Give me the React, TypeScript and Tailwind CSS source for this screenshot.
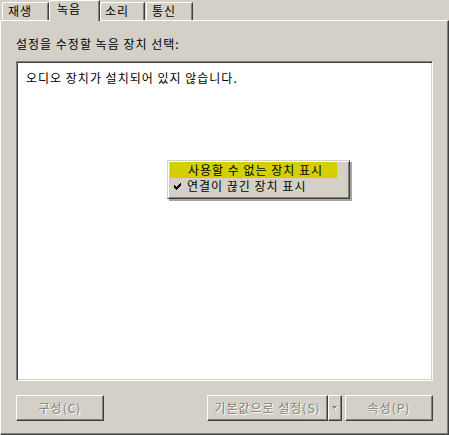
import React from "react";

function Btn({ w, children, extra = "" }: { w: string; children: React.ReactNode; extra?: string }) {
  return (
    <div
      className={`${w} ${extra} h-[26px] flex items-center justify-center border border-t-white border-l-white border-r-[#404040] border-b-[#404040] shadow-[inset_-1px_-1px_0_#808080] text-[12px] leading-[14px] text-[#808080] [text-shadow:1px_1px_0_#ffffff]`}
    >
      {children}
    </div>
  );
}

export default function App() {
  return (
    <div className="relative w-[449px] h-[435px] bg-[#d4d0c8] flex flex-col font-['Noto_Sans_CJK_KR','Noto_Sans',sans-serif] tracking-[1px] text-black overflow-hidden">
      {/* Tabs */}
      <div className="h-[20px] flex items-end shrink-0">
        <div className="ml-[2px] w-[47px] h-[18px] border-t border-l border-r border-t-white border-l-white border-r-[#404040] shadow-[inset_-1px_0_0_#808080] rounded-tl-[2px] text-[12px] leading-[16px] pl-[5px]">
          재생
        </div>
        <div className="relative z-10 w-[51px] h-[21px] -mb-px bg-[#d4d0c8] border-t border-l border-r border-t-white border-l-white border-r-[#404040] shadow-[inset_-1px_0_0_#808080] rounded-tl-[2px] text-[12px] leading-[16px] pl-[7px]">
          녹음
        </div>
        <div className="w-[45px] h-[18px] border-t border-l border-r border-t-white border-l-white border-r-[#404040] shadow-[inset_-1px_0_0_#808080] rounded-tl-[2px] text-[12px] leading-[16px] pl-[4px]">
          소리
        </div>
        <div className="ml-[1px] w-[47px] h-[18px] border-t border-l border-r border-t-white border-l-white border-r-[#404040] shadow-[inset_-1px_0_0_#808080] rounded-tl-[2px] text-[12px] leading-[16px] pl-[5px]">
          통신
        </div>
      </div>

      {/* Panel */}
      <div className="flex-1 flex flex-col border-t border-l border-r border-b border-t-white border-l-white border-r-[#404040] border-b-[#404040] shadow-[inset_-1px_-1px_0_#808080] pl-[15px]">
        <div className="mt-[16px] h-[14px] text-[12px] leading-[14px]">설정을 수정할 녹음 장치 선택:</div>
        <div className="mt-[10px] w-[417px] h-[320px] bg-white border border-t-[#808080] border-l-[#808080] border-r-white border-b-white shadow-[inset_1px_1px_0_#404040,inset_-1px_-1px_0_#d4d0c8] pl-[9px] pt-[9px]">
          <div className="text-[12px] leading-[14px]">오디오 장치가 설치되어 있지 않습니다.</div>
        </div>
        <div className="mt-[14px] w-[417px] flex items-start">
          <Btn w="w-[88px]">구성(C)</Btn>
          <div className="flex-1" />
          <Btn w="w-[121px]">기본값으로 설정(S)</Btn>
          <div className="w-[14px] h-[26px] flex items-center justify-center border border-t-white border-l-white border-r-[#404040] border-b-[#404040] shadow-[inset_-1px_-1px_0_#808080]">
            <svg width="6" height="4" viewBox="0 0 6 4" className="overflow-visible">
              <polygon points="1,1 6,1 3.5,4" fill="#ffffff" />
              <polygon points="0,0 5,0 2.5,3" fill="#808080" />
            </svg>
          </div>
          <Btn w="w-[88px]" extra="ml-[3px]">속성(P)</Btn>
        </div>
      </div>

      {/* Context menu */}
      <div className="absolute left-[167px] top-[160px] w-[183px] h-[39px] bg-[#d4d0c8] border border-t-[#d4d0c8] border-l-[#d4d0c8] border-r-[#404040] border-b-[#404040] shadow-[inset_1px_1px_0_#ffffff,inset_-1px_-1px_0_#808080,2px_2px_0_rgba(0,0,0,0.35)] pt-[1px] pl-[2px]">
        <div className="w-[167px] h-[16px] bg-[#d4d000] pl-[18px] text-[12px] leading-[16px]">사용할 수 없는 장치 표시</div>
        <div className="relative w-[167px] h-[16px] pl-[17px] text-[12px] leading-[16px]">
          <svg width="7" height="7" viewBox="0 0 7 7" className="absolute left-[4px] top-[5px]">
            <path d="M0 2h1v1h1v1h1v-1h1v-1h1v-1h1v-1h1v3h-1v1h-1v1h-1v1h-1v1h-1v-1h-1v-1h-1z" fill="#000" />
          </svg>
          연결이 끊긴 장치 표시
        </div>
      </div>
    </div>
  );
}
